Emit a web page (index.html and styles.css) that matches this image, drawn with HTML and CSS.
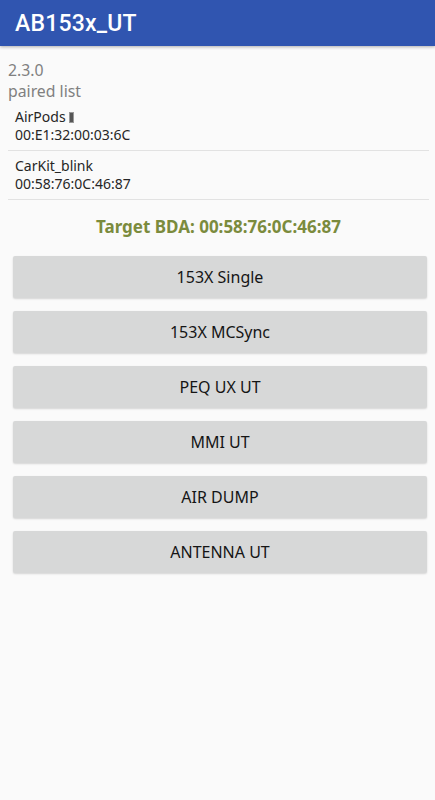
FILE: index.html
```html
<!DOCTYPE html>
<html>
<head>
<meta charset="utf-8">
<link rel="stylesheet" href="styles.css">
</head>
<body>
<header class="appbar"><span class="title">AB153x_UT</span></header>
<main class="content">
  <div class="version">2.3.0</div>
  <div class="label">paired list</div>
  <ul class="devices">
    <li class="device">
      <div class="name">AirPods <span class="glyph"></span></div>
      <div class="mac">00:E1:32:00:03:6C</div>
    </li>
    <li class="device">
      <div class="name">CarKit_blink</div>
      <div class="mac">00:58:76:0C:46:87</div>
    </li>
  </ul>
  <div class="target">Target BDA: 00:58:76:0C:46:87</div>
  <div class="buttons">
    <button class="btn">153X Single</button>
    <button class="btn">153X MCSync</button>
    <button class="btn">PEQ UX UT</button>
    <button class="btn">MMI UT</button>
    <button class="btn">AIR DUMP</button>
    <button class="btn">ANTENNA UT</button>
  </div>
</main>
</body>
</html>
```
FILE: styles.css
```css
* { box-sizing: border-box; }
html, body { margin: 0; padding: 0; }
body {
  background: #fafafa;
  font-family: "Noto Sans", Roboto, sans-serif;
  width: 435px;
  height: 800px;
  overflow: hidden;
}
.appbar {
  height: 46px;
  background: #3055b0;
  display: flex;
  align-items: center;
  padding-left: 15px;
  box-shadow: 0 1px 3px rgba(0,0,0,0.3);
}
.title {
  font-family: Roboto, "Noto Sans", sans-serif;
  color: #fff;
  font-size: 23px;
  font-weight: 500;
  letter-spacing: 0.2px;
}
.content {
  padding: 14px 6px 0 8px;
}
.version, .label {
  color: #808080;
  font-size: 15.8px;
  line-height: 21px;
}
.devices {
  list-style: none;
  margin: 0;
  padding: 0;
}
.device {
  padding: 6px 0 6px 7px;
  border-bottom: 1.5px solid #e2e2e2;
}
.name, .mac {
  color: #262626;
  font-size: 14px;
  line-height: 18px;
}
.glyph {
  display: inline-block;
  width: 5px;
  height: 11px;
  background: #555;
  border: 1px solid #999;
  vertical-align: -1px;
}
.target {
  color: #7b8b3d;
  font-weight: 700;
  font-size: 17px;
  line-height: 23px;
  text-align: center;
  padding: 15px 0 18px;
}
.buttons {
  display: flex;
  flex-direction: column;
  gap: 13px;
  padding: 0 0 0 5px;
}
.btn {
  height: 42px;
  width: 414px;
  border: none;
  border-radius: 2px;
  background: #d7d8d8;
  color: #151515;
  font-family: "Noto Sans", Roboto, sans-serif;
  font-size: 16px;
  font-weight: 400;
  box-shadow: 0 1px 2px rgba(0,0,0,0.15);
}
```
